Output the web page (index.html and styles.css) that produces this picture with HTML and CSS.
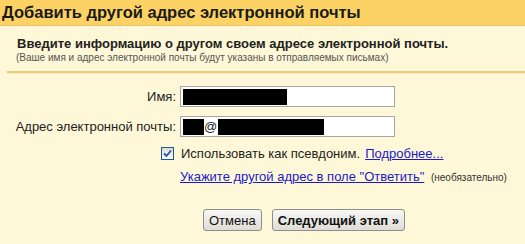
FILE: index.html
```html
<!DOCTYPE html>
<html lang="ru">
<head>
    <meta charset="UTF-8">
    <title>Добавить другой адрес электронной почты</title>
    <link rel="stylesheet" href="styles.css">
</head>
<body>
    <div class="title-bar">
        <h1>Добавить другой адрес электронной почты</h1>
    </div>

    <div class="intro">
        <div class="intro-title">Введите информацию о другом своем адресе электронной почты.</div>
        <div class="intro-note">(Ваше имя и адрес электронной почты будут указаны в отправляемых письмах)</div>
    </div>

    <div class="divider"></div>

    <form class="address-form">
        <label class="field-label" for="name">Имя:</label>
        <div class="field-box" id="name">
            <span class="redact redact-name"></span>
        </div>

        <label class="field-label" for="email">Адрес электронной почты:</label>
        <div class="field-box" id="email">
            <span class="redact redact-user"></span><span class="at">@</span><span class="redact redact-domain"></span>
        </div>

        <div class="option-row">
            <span class="checkbox">
                <svg width="9" height="9" viewBox="0 0 9 9">
                    <path d="M1 4.5 L3.5 7 L8 1.5" fill="none" stroke="#2a4fa8" stroke-width="1.8"/>
                </svg>
            </span>
            <span>Использовать как псевдоним.</span>
            <a href="#" class="link">Подробнее...</a>
        </div>

        <div class="reply-row">
            <a href="#" class="link">Укажите другой адрес в поле "Ответить"</a>
            <span class="optional">(необязательно)</span>
        </div>

        <div class="actions">
            <button type="button" class="btn">Отмена</button>
            <button type="button" class="btn btn-next">Следующий этап »</button>
        </div>
    </form>
</body>
</html>
```

FILE: styles.css
```css
body {
    margin: 0;
    background-color: #fff8d8;
    font-family: 'Liberation Sans', Arial, sans-serif;
    font-size: 13px;
    color: #222;
}

.title-bar {
    height: 25px;
    background-color: #fdd264;
    border-bottom: 1px solid #e9c268;
}

h1 {
    margin: 0;
    padding-left: 2px;
    font-size: 16.5px;
    line-height: 25px;
    color: #1a1a1a;
}

.intro {
    padding: 10px 0 0 17px;
}

.intro-title {
    font-weight: bold;
    line-height: 16px;
}

.intro-note {
    font-size: 10px;
    line-height: 12px;
    color: #555;
    margin-left: -1px;
}

.divider {
    margin: 7px 0 0 7px;
    height: 2px;
    background-color: #e8cb7c;
    box-shadow: 0 1px 0 #fbecb8;
}

.address-form {
    display: grid;
    grid-template-columns: 176px 215px 1fr;
    column-gap: 4px;
    row-gap: 9px;
    align-items: center;
    padding-top: 13px;
}

.field-label {
    grid-column: 1;
    text-align: right;
    line-height: 15px;
}

.field-box {
    grid-column: 2;
    height: 19px;
    border: 1px solid #a6a6a6;
    background-color: #fff;
    display: flex;
    align-items: center;
    padding-left: 2px;
}

.redact {
    display: inline-block;
    height: 16px;
    background-color: #000;
}

.redact-name {
    width: 104px;
}

.redact-user {
    width: 21px;
}

.redact-domain {
    width: 106px;
}

.at {
    font-size: 13px;
    padding: 0 1px 0 0;
}

.option-row {
    grid-column: 1 / -1;
    display: flex;
    align-items: center;
    gap: 5px;
    padding-left: 161px;
    line-height: 15px;
    white-space: nowrap;
}

.checkbox {
    width: 11px;
    height: 11px;
    border: 1px solid #1c5a96;
    background: linear-gradient(#dcdcd6, #fafaf8);
    display: inline-flex;
    align-items: center;
    justify-content: center;
    margin-right: 2px;
}

.link {
    color: #1a1acc;
    text-decoration: underline;
}

.reply-row {
    grid-column: 1 / -1;
    padding-left: 180px;
    line-height: 15px;
    margin-top: -1px;
    white-space: nowrap;
}

.optional {
    font-size: 10px;
    color: #333;
    margin-left: 3px;
}

.actions {
    grid-column: 1 / -1;
    display: flex;
    gap: 10px;
    padding-left: 203px;
    margin-top: 15px;
}

.btn {
    font-family: 'Liberation Sans', Arial, sans-serif;
    font-size: 13px;
    color: #111;
    height: 22px;
    padding: 0 5px;
    border: 1px solid #8e8e8e;
    border-radius: 3px;
    background: linear-gradient(#f8f8f6, #dddcd6);
    white-space: nowrap;
}

.btn-next {
    font-weight: bold;
}
```
